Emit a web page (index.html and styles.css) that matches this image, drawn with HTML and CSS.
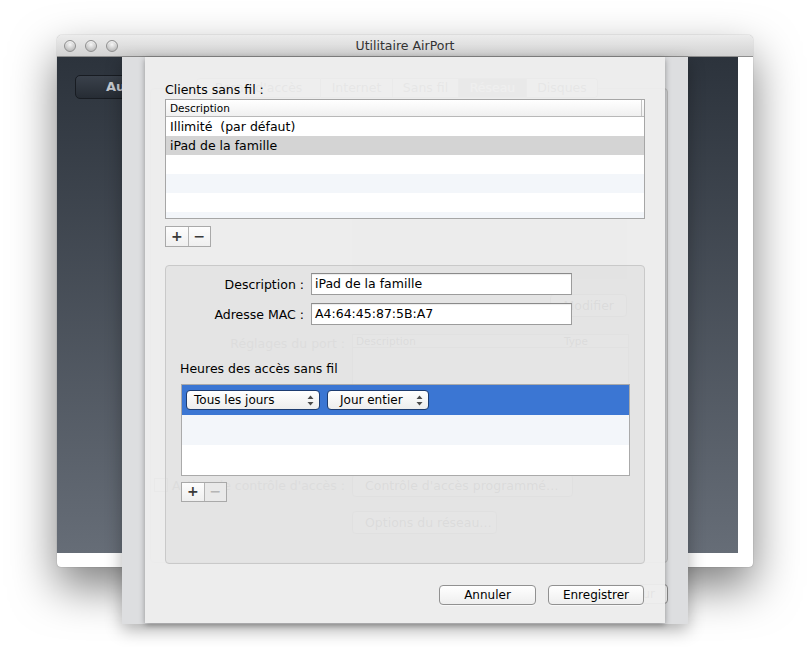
FILE: index.html
```html
<!DOCTYPE html>
<html lang="fr">

<head>
    <meta charset="UTF-8">
    <meta name="viewport" content="width=device-width, initial-scale=1.0">
    <title>Utilitaire AirPort</title>
    <link rel="stylesheet" href="styles.css">
</head>

<body>
    <div id="desk">
        <div class="window">
            <div class="titlebar">
                <div class="lights"><span></span><span></span><span></span></div>
                <div class="title">Utilitaire AirPort</div>
            </div>
            <div class="content">
                <div class="stage">
                    <div class="dark-btn">Autres périphériques Wi-Fi</div>
                </div>
            </div>
        </div>

        <!-- panneau de réglages (derrière la feuille) -->
        <div class="panel">
            <div class="tabbox">
                <div class="tabs">
                    <div class="tab tab-borne">Borne d'accès</div>
                    <div class="tab tab-internet">Internet</div>
                    <div class="tab tab-sansfil">Sans fil</div>
                    <div class="tab tab-reseau active">Réseau</div>
                    <div class="tab tab-disques">Disques</div>
                </div>
                <div class="ghost-list"></div>
                <div class="ghost-row ghost-right">
                    <div class="ghost-btn ghost-modifier">Modifier</div>
                </div>
                <div class="ghost-row ghost-port">
                    <div class="ghost-label">Réglages du port :</div>
                    <div class="ghost-table">
                        <div class="ghost-head"><span>Description</span><span>Type</span></div>
                    </div>
                </div>
                <div class="ghost-row ghost-acces">
                    <div class="ghost-label"><span class="ghost-check"></span>Activer le contrôle d'accès :</div>
                    <div class="ghost-btn ghost-prog">Contrôle d'accès programmé…</div>
                </div>
                <div class="ghost-row ghost-options">
                    <div class="ghost-label"></div>
                    <div class="ghost-btn ghost-opt">Options du réseau…</div>
                </div>
            </div>
            <div class="ghost-footer">
                <div class="ghost-btn ghost-update">Mettre à jour</div>
            </div>
        </div>

        <!-- feuille : clients sans fil -->
        <div class="sheet">
            <div class="label">Clients sans fil :</div>
            <div class="table">
                <div class="table-head">
                    <div class="head-cell">Description</div>
                </div>
                <div class="table-body">
                    <div class="row">Illimité  (par défaut)</div>
                    <div class="row selected">iPad de la famille</div>
                    <div class="row"></div>
                    <div class="row alt"></div>
                    <div class="row"></div>
                    <div class="row alt"></div>
                </div>
            </div>
            <div class="plusminus">
                <div class="pm">+</div>
                <div class="pm">−</div>
            </div>

            <div class="groupbox">
                <div class="fields">
                    <label class="field-label">Description :</label>
                    <div class="field">iPad de la famille</div>
                    <label class="field-label">Adresse MAC :</label>
                    <div class="field">A4:64:45:87:5B:A7</div>
                </div>
                <div class="label hours-label">Heures des accès sans fil</div>
                <div class="hours">
                    <div class="hours-row active">
                        <div class="popup popup-days">Tous les jours
                            <svg class="arrows" width="7" height="11" viewBox="0 0 7 11"><path d="M3.5 0.5 L6.5 4 H0.5Z M3.5 10.5 L0.5 7 H6.5Z" fill="#4a4a4a"/></svg>
                        </div>
                        <div class="popup popup-time">Jour entier
                            <svg class="arrows" width="7" height="11" viewBox="0 0 7 11"><path d="M3.5 0.5 L6.5 4 H0.5Z M3.5 10.5 L0.5 7 H6.5Z" fill="#4a4a4a"/></svg>
                        </div>
                    </div>
                    <div class="hours-row alt"></div>
                    <div class="hours-row"></div>
                </div>
                <div class="plusminus pm-small">
                    <div class="pm">+</div>
                    <div class="pm disabled">−</div>
                </div>
            </div>

            <div class="buttons">
                <div class="button">Annuler</div>
                <div class="button">Enregistrer</div>
            </div>
        </div>
    </div>
</body>

</html>
```

FILE: styles.css
```css
body {
    margin: 0;
    background: #fff;
    font-family: "Lucida Grande", "DejaVu Sans", sans-serif;
    font-size: 12.5px;
    color: #000;
}

#desk {
    position: relative;
    width: 810px;
    height: 647px;
    overflow: hidden;
}

/* fenêtre principale */
.window {
    position: absolute;
    left: 57px;
    top: 35px;
    width: 696px;
    height: 532px;
    border-radius: 5px 5px 4px 4px;
    background: #fff;
    box-shadow: 0 20px 45px rgba(0, 0, 0, 0.5), 0 0 1px rgba(0, 0, 0, 0.5);
    overflow: hidden;
}

.titlebar {
    position: relative;
    height: 21px;
    border-bottom: 1px solid #8e8e8e;
    background: linear-gradient(#ececec, #d2d2d2);
}

.lights {
    display: flex;
    gap: 9px;
    padding: 5px 0 0 7px;
}

.lights span {
    width: 10px;
    height: 10px;
    border-radius: 50%;
    border: 1px solid #8f8f8f;
    background: radial-gradient(circle at 50% 35%, #f6f6f6, #c0c0c0 70%, #a9a9a9);
    box-shadow: inset 0 1px 1px rgba(255, 255, 255, 0.7);
}

.title {
    position: absolute;
    top: 0;
    left: 0;
    right: 0;
    line-height: 21px;
    text-align: center;
    color: #333;
}

.content {
    height: 510px;
}

.stage {
    width: 681px;
    height: 496px;
    background: linear-gradient(#2c333c, #666d77);
    padding: 18px 0 0 18px;
    box-sizing: border-box;
}

.dark-btn {
    width: 200px;
    height: 24px;
    box-sizing: border-box;
    border: 1px solid #181c22;
    border-radius: 5px;
    background: linear-gradient(#3a414b, #262c34);
    color: #c6cad0;
    font-weight: bold;
    font-size: 13px;
    line-height: 22px;
    padding-left: 30px;
    white-space: nowrap;
}

/* panneau derrière la feuille */
.panel {
    position: absolute;
    left: 122px;
    top: 57px;
    width: 566px;
    height: 567px;
    background: #dddee0;
    box-shadow: 0 6px 16px rgba(0, 0, 0, 0.3);
    padding: 31px 20px 0 28px;
    box-sizing: border-box;
}

.tabbox {
    height: 475px;
    border: 1px solid #b9b9b9;
    border-radius: 4px;
    background: rgba(0, 0, 0, 0.04);
    box-sizing: border-box;
}

.tabs {
    display: flex;
    margin: -11px 0 0 45px;
    height: 20px;
}

.tab {
    border: 1px solid #9a9a9a;
    border-left: none;
    background: #f4f4f4;
    color: #333;
    text-align: center;
    line-height: 18px;
    box-sizing: border-box;
}

.tab-borne { width: 125px; border-left: 1px solid #9a9a9a; border-radius: 4px 0 0 4px; }
.tab-internet { width: 72px; }
.tab-sansfil { width: 66px; }
.tab-reseau { width: 68px; }
.tab-disques { width: 71px; border-radius: 0 4px 4px 0; }

.tab.active {
    background: #8a8a8a;
    color: #fff;
}

.ghost-list {
    width: 275px;
    height: 140px;
    margin: 41px 0 0 201px;
    background: #c4c4c4;
}

.ghost-row {
    display: flex;
    align-items: center;
    gap: 7px;
}

.ghost-label {
    width: 194px;
    text-align: right;
    color: #222;
    white-space: nowrap;
}

.ghost-btn {
    height: 23px;
    border: 1px solid #8a8a8a;
    border-radius: 4px;
    background: #fafafa;
    box-sizing: border-box;
    line-height: 21px;
    padding: 0 12px;
    white-space: nowrap;
}

.ghost-right {
    justify-content: flex-end;
    padding-right: 40px;
    margin-top: 15px;
}

.ghost-port {
    align-items: flex-start;
    margin-top: 17px;
}

.ghost-table {
    width: 275px;
    height: 120px;
    background: #fff;
    border: 1px solid #999;
}

.ghost-head {
    display: flex;
    justify-content: space-between;
    padding: 0 40px 0 3px;
    font-size: 10.5px;
    border-bottom: 1px solid #999;
}

.ghost-port .ghost-label {
    padding-top: 2px;
}

.ghost-acces {
    margin-top: 18px;
}

.ghost-check {
    display: inline-block;
    width: 12px;
    height: 12px;
    border: 1px solid #777;
    margin-right: 4px;
    vertical-align: -2px;
}

.ghost-prog {
    width: 221px;
}

.ghost-options {
    margin-top: 14px;
}

.ghost-opt {
    width: 145px;
}

.ghost-footer {
    display: flex;
    justify-content: flex-end;
    margin-top: 21px;
}

.ghost-update {
    height: 20px;
    line-height: 18px;
    font-size: 12px;
}

/* feuille */
.sheet {
    position: absolute;
    left: 145px;
    top: 57px;
    width: 520px;
    height: 566px;
    box-sizing: border-box;
    padding: 25px 20px 0 20px;
    background: rgba(237, 237, 237, 0.96);
    box-shadow: 0 2px 6px rgba(0, 0, 0, 0.35);
}

.label {
    line-height: 16px;
    margin-bottom: 1px;
}

.table {
    width: 480px;
    border: 1px solid #a6a6a6;
    box-sizing: border-box;
    background: #fff;
}

.table-head {
    display: flex;
    height: 16px;
    border-bottom: 1px solid #b8b8b8;
    background: linear-gradient(#fff, #f0f0f0);
    padding-right: 2px;
}

.head-cell {
    flex: 1;
    font-size: 10.5px;
    line-height: 16px;
    padding-left: 4px;
    border-right: 1px solid #c4c4c4;
}

.table-body {
    height: 101px;
    overflow: hidden;
}

.row {
    height: 19px;
    line-height: 19px;
    padding-left: 4px;
    white-space: pre;
}

.row.alt {
    background: #f3f6fa;
}

.row.selected {
    background: #d4d4d4;
}

.plusminus {
    display: flex;
    width: 46px;
    height: 21px;
    margin-top: 7px;
    border: 1px solid #a9a9a9;
    box-sizing: border-box;
    background: linear-gradient(#fdfdfd, #efefef);
}

.pm {
    flex: 1;
    text-align: center;
    line-height: 18px;
    font-size: 14px;
    font-weight: bold;
    color: #3a3a3a;
}

.pm + .pm {
    border-left: 1px solid #b4b4b4;
}

.pm.disabled {
    color: #b5b5b5;
    background: #e9e9e9;
}

.groupbox {
    height: 299px;
    margin-top: 18px;
    border: 1px solid #c9c9c9;
    border-radius: 4px;
    background: rgba(0, 0, 0, 0.035);
    box-sizing: border-box;
    padding: 7px 14px 0 15px;
}

.fields {
    display: grid;
    grid-template-columns: 138px 261px;
    column-gap: 7px;
    row-gap: 8px;
    margin-left: -15px;
    align-items: center;
}

.field-label {
    text-align: right;
}

.field {
    height: 22px;
    box-sizing: border-box;
    border: 1px solid #9c9c9c;
    border-top-color: #8a8a8a;
    background: #fff;
    line-height: 20px;
    padding-left: 3px;
    box-shadow: inset 0 1px 1px rgba(0, 0, 0, 0.08);
}

.hours-label {
    margin: 36px 0 7px -1px;
}

.hours {
    border: 1px solid #aaa;
    background: #fff;
}

.hours-row {
    height: 30px;
}

.hours-row.alt {
    background: #f3f6fa;
}

.hours-row.active {
    background: #3b76d3;
    display: flex;
    align-items: center;
    gap: 7px;
    padding-left: 4px;
}

.popup {
    position: relative;
    height: 20px;
    box-sizing: border-box;
    border: 1px solid #1d3c70;
    border-radius: 4px;
    background: linear-gradient(#fff, #ededed);
    font-size: 12px;
    line-height: 18px;
    padding-left: 7px;
}

.popup-days {
    width: 134px;
}

.popup-time {
    width: 102px;
    padding-left: 12px;
}

.arrows {
    position: absolute;
    right: 5px;
    top: 4px;
}

.pm-small {
    margin-top: 6px;
    height: 20px;
}

.pm-small .pm {
    line-height: 17px;
}

.buttons {
    display: flex;
    justify-content: flex-end;
    gap: 12px;
    margin-top: 21px;
    padding-right: 1px;
}

.button {
    height: 20px;
    box-sizing: border-box;
    border: 1px solid #919191;
    border-radius: 4px;
    background: linear-gradient(#fff, #eeeeee);
    box-shadow: 0 1px 0 rgba(255, 255, 255, 0.6);
    font-size: 12px;
    line-height: 18px;
    text-align: center;
}

.button:first-child {
    width: 97px;
}

.button:last-child {
    width: 96px;
}
```
